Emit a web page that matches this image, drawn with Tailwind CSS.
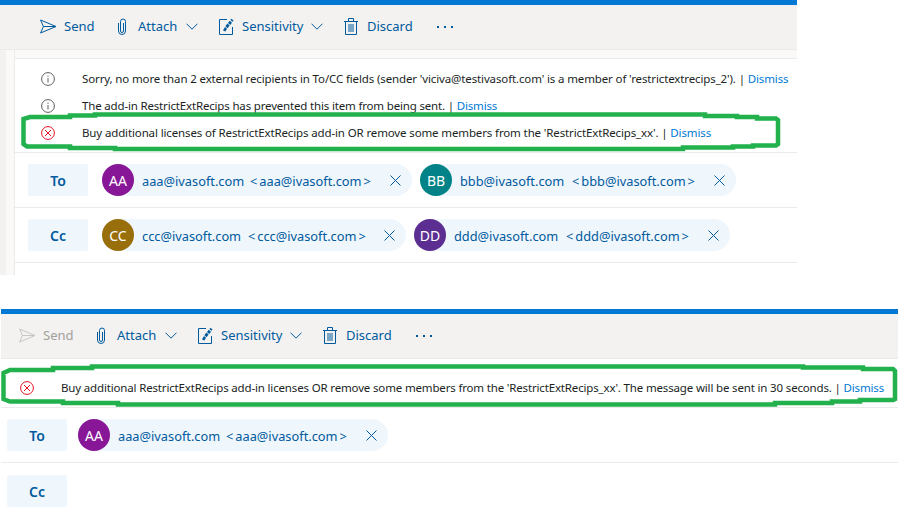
<!DOCTYPE html>
<html lang="en">
  <head>
    <meta charset="UTF-8" />
    <meta name="viewport" content="width=device-width, initial-scale=1.0" />
    <title>RestrictExtRecips compose errors</title>
    <script src="https://cdn.jsdelivr.net/npm/@tailwindcss/browser@4"></script>
  </head>

  <body class="relative w-[898px] h-[520px] overflow-hidden bg-white font-['Noto_Sans',sans-serif] text-[#201f1e]">
    <!-- shared toolbar / message icons -->
    <svg class="hidden">
      <symbol id="send" viewBox="0 0 17 15"><path d="M.6 1 16 7.5.6 14 3.4 7.5ZM3.4 7.5H16" fill="none" stroke="currentColor" stroke-width="1" /></symbol>
      <symbol id="clip" viewBox="0 0 11 17"><path d="M6.5 5v8a1.5 1.5 0 0 1-3 0V3.5a2.5 2.5 0 0 1 5 0V13a3.5 3.5 0 0 1-7 0V5" fill="none" stroke="currentColor" stroke-width="1" /></symbol>
      <symbol id="chevron" viewBox="0 0 12 7"><path d="M.5.7 6 6.2 11.5.7" fill="none" stroke="currentColor" stroke-width="1" /></symbol>
      <symbol id="label" viewBox="0 0 16 17"><path d="M8 1.5H.5v15h13V9" fill="none" stroke="currentColor" stroke-width="1" /><path d="M4 12.5 6 9l2 1.8-1.6 2.6ZM6.4 8.2l2-2.6 2.2 2-2 2.6ZM9 5l1.8-2.2 2.2 2-1.8 2.2ZM11.4 2l1-1.2 2.2 1.8-1 1.2Z" fill="currentColor" /></symbol>
      <symbol id="trash" viewBox="0 0 14 17"><path d="M0 3.5h14M4.5 3.5v-3h5v3M1.5 3.5v13h11v-13M5 6v8M7 6v8M9 6v8" fill="none" stroke="currentColor" stroke-width="1" /></symbol>
      <symbol id="info" viewBox="0 0 14 14"><circle cx="7" cy="7" r="6.4" fill="none" stroke="currentColor" stroke-width="1" /><path d="M7 6v4.5M7 3.6v1.2" fill="none" stroke="currentColor" stroke-width="1" /></symbol>
      <symbol id="error" viewBox="0 0 14 14"><circle cx="7" cy="7" r="6.4" fill="none" stroke="currentColor" stroke-width="1" /><path d="M4 4l6 6M10 4l-6 6" fill="none" stroke="currentColor" stroke-width="1" /></symbol>
      <symbol id="close" viewBox="0 0 11 11"><path d="M.5.5l10 10M10.5.5l-10 10" fill="none" stroke="currentColor" stroke-width="1" /></symbol>
    </svg>

    <!-- first compose window -->
    <section class="w-[797px] h-[275px] flex flex-col">
      <div class="h-[5px] bg-[#0078d4]"></div>
      <div class="h-[45px] flex items-center pl-[40px] pb-[1px] bg-[#f3f2f1] border-b border-[#ebeaea] text-[13px] text-[#005a9e]">
        <svg class="w-[17px] h-[15px]"><use href="#send" /></svg>
        <span class="ml-[7px] mt-[1px] w-[30px]">Send</span>
        <svg class="ml-[23px] w-[11px] h-[17px]"><use href="#clip" /></svg>
        <span class="ml-[10px] mt-[1px] w-[40px]">Attach</span>
        <svg class="ml-[8px] w-[12px] h-[7px]"><use href="#chevron" /></svg>
        <svg class="ml-[21px] w-[16px] h-[17px]"><use href="#label" /></svg>
        <span class="ml-[7px] mt-[1px] w-[61px]">Sensitivity</span>
        <svg class="ml-[8px] w-[12px] h-[7px]"><use href="#chevron" /></svg>
        <svg class="ml-[21px] w-[14px] h-[17px]"><use href="#trash" /></svg>
        <span class="ml-[9px] mt-[1px] w-[45px]">Discard</span>
        <div class="ml-[25px] flex gap-[5px]">
          <i class="w-[2px] h-[2px] bg-[#005a9e]"></i><i class="w-[2px] h-[2px] bg-[#005a9e]"></i><i class="w-[2px] h-[2px] bg-[#005a9e]"></i>
        </div>
      </div>
      <div class="flex-1 flex min-h-0">
        <div class="w-[15px] shrink-0 flex">
          <div class="w-[6px] bg-[#f3f2f1]"></div>
          <div class="w-[9px] bg-[#faf9f8] border-r border-[#ebebeb]"></div>
        </div>
        <div class="flex-1 min-w-0 flex flex-col">
          <div class="h-[9px] bg-[#faf9f8] border-b border-[#ebebeb]"></div>
          <div class="h-[94px] py-[6px] border-b border-[#ebebeb] text-[11.5px] tracking-[-0.13px]">
            <div class="h-[27px] flex items-center pl-[26px]">
              <svg class="w-[14px] h-[14px] shrink-0 text-[#605e5c]"><use href="#info" /></svg>
              <p class="ml-[27px] whitespace-nowrap">Sorry, no more than 2 external recipients in To/CC fields (sender 'viciva@testivasoft.com' is a member of 'restrictextrecips_2'). | <span class="text-[#0078d4]">Dismiss</span></p>
            </div>
            <div class="h-[27px] flex items-center pl-[26px]">
              <svg class="w-[14px] h-[14px] shrink-0 text-[#605e5c]"><use href="#info" /></svg>
              <p class="ml-[27px] whitespace-nowrap tracking-[-0.17px]">The add-in RestrictExtRecips has prevented this item from being sent. | <span class="text-[#0078d4]">Dismiss</span></p>
            </div>
            <div class="h-[27px] flex items-center pl-[26px]">
              <svg class="w-[14px] h-[14px] shrink-0 text-[#e81123]"><use href="#error" /></svg>
              <p class="ml-[27px] whitespace-nowrap">Buy additional licenses of RestrictExtRecips add-in OR remove some members from the 'RestrictExtRecips_xx'. | <span class="text-[#0078d4]">Dismiss</span></p>
            </div>
          </div>
          <div class="h-[55px] flex items-center pl-[13px] border-b border-[#ebebeb]">
            <div class="w-[60px] h-[32px] pt-[1px] flex items-center justify-center rounded-[2px] bg-[#eff6fc] text-[14px] font-semibold text-[#005a9e]">To</div>
            <div class="ml-[14px] w-[310px] h-[32px] flex items-center rounded-full bg-[#eff6fc] text-[12.8px] text-[#005a9e]">
              <div class="w-[32px] h-[32px] pt-[1px] flex items-center justify-center rounded-full bg-[#881798] text-[14px] text-white">AA</div>
              <span class="ml-[8px] mt-[3px] w-[108px]">aaa@ivasoft.com</span>
              <span class="mt-[3px]">&lt;<span class="mx-[2px]">aaa@ivasoft.com</span>&gt;</span>
              <svg class="ml-auto mr-[11px] w-[11px] h-[11px]"><use href="#close" /></svg>
            </div>
            <div class="ml-[8px] w-[316px] h-[32px] flex items-center rounded-full bg-[#eff6fc] text-[12.8px] text-[#005a9e]">
              <div class="w-[32px] h-[32px] pt-[1px] flex items-center justify-center rounded-full bg-[#038387] text-[14px] text-white">BB</div>
              <span class="ml-[8px] mt-[3px] w-[112px]">bbb@ivasoft.com</span>
              <span class="mt-[3px]">&lt;<span class="mx-[2px]">bbb@ivasoft.com</span>&gt;</span>
              <svg class="ml-auto mr-[11px] w-[11px] h-[11px]"><use href="#close" /></svg>
            </div>
          </div>
          <div class="h-[55px] flex items-center pl-[13px] border-b border-[#ebebeb]">
            <div class="w-[60px] h-[32px] pt-[1px] flex items-center justify-center rounded-[2px] bg-[#eff6fc] text-[14px] font-semibold text-[#005a9e]">Cc</div>
            <div class="ml-[14px] w-[304px] h-[32px] flex items-center rounded-full bg-[#eff6fc] text-[12.8px] text-[#005a9e]">
              <div class="w-[32px] h-[32px] pt-[1px] flex items-center justify-center rounded-full bg-[#986f0b] text-[14px] text-white">CC</div>
              <span class="ml-[8px] mt-[3px] w-[106px]">ccc@ivasoft.com</span>
              <span class="mt-[3px]">&lt;<span class="mx-[2px]">ccc@ivasoft.com</span>&gt;</span>
              <svg class="ml-auto mr-[11px] w-[11px] h-[11px]"><use href="#close" /></svg>
            </div>
            <div class="ml-[8px] w-[316px] h-[32px] flex items-center rounded-full bg-[#eff6fc] text-[12.8px] text-[#005a9e]">
              <div class="w-[32px] h-[32px] pt-[1px] flex items-center justify-center rounded-full bg-[#5c2e91] text-[14px] text-white">DD</div>
              <span class="ml-[8px] mt-[3px] w-[112px]">ddd@ivasoft.com</span>
              <span class="mt-[3px]">&lt;<span class="mx-[2px]">ddd@ivasoft.com</span>&gt;</span>
              <svg class="ml-auto mr-[11px] w-[11px] h-[11px]"><use href="#close" /></svg>
            </div>
          </div>
        </div>
      </div>
    </section>

    <!-- second compose window -->
    <section class="mt-[34px] ml-[1px] w-[897px] flex flex-col">
      <div class="h-[5px] bg-[#0078d4]"></div>
      <div class="h-[45px] flex items-center pl-[18px] pb-[1px] bg-[#f3f2f1] border-b border-[#ebeaea] text-[13px] text-[#005a9e]">
        <svg class="w-[17px] h-[15px] text-[#c8c6c4]"><use href="#send" /></svg>
        <span class="ml-[7px] mt-[1px] w-[30px] text-[#a19f9d]">Send</span>
        <svg class="ml-[23px] w-[11px] h-[17px]"><use href="#clip" /></svg>
        <span class="ml-[10px] mt-[1px] w-[40px]">Attach</span>
        <svg class="ml-[8px] w-[12px] h-[7px]"><use href="#chevron" /></svg>
        <svg class="ml-[21px] w-[16px] h-[17px]"><use href="#label" /></svg>
        <span class="ml-[7px] mt-[1px] w-[61px]">Sensitivity</span>
        <svg class="ml-[8px] w-[12px] h-[7px]"><use href="#chevron" /></svg>
        <svg class="ml-[21px] w-[14px] h-[17px]"><use href="#trash" /></svg>
        <span class="ml-[9px] mt-[1px] w-[45px]">Discard</span>
        <div class="ml-[25px] flex gap-[5px]">
          <i class="w-[2px] h-[2px] bg-[#005a9e]"></i><i class="w-[2px] h-[2px] bg-[#005a9e]"></i><i class="w-[2px] h-[2px] bg-[#005a9e]"></i>
        </div>
      </div>
      <div class="h-[49px] flex items-center pl-[19px] pt-[10px] border-b border-[#ebebeb] text-[11.5px] tracking-[-0.16px]">
        <svg class="w-[14px] h-[14px] shrink-0 text-[#e81123]"><use href="#error" /></svg>
        <p class="ml-[27px] whitespace-nowrap">Buy additional RestrictExtRecips add-in licenses OR remove some members from the 'RestrictExtRecips_xx'. The message will be sent in 30 seconds. | <span class="text-[#0078d4]">Dismiss</span></p>
      </div>
      <div class="h-[55px] flex items-center pl-[6px] border-b border-[#ebebeb]">
        <div class="w-[60px] h-[32px] pt-[1px] flex items-center justify-center rounded-[2px] bg-[#eff6fc] text-[14px] font-semibold text-[#005a9e]">To</div>
        <div class="ml-[11px] w-[310px] h-[32px] flex items-center rounded-full bg-[#eff6fc] text-[12.8px] text-[#005a9e]">
          <div class="w-[32px] h-[32px] pt-[1px] flex items-center justify-center rounded-full bg-[#881798] text-[14px] text-white">AA</div>
          <span class="ml-[8px] mt-[3px] w-[108px]">aaa@ivasoft.com</span>
          <span class="mt-[3px]">&lt;<span class="mx-[2px]">aaa@ivasoft.com</span>&gt;</span>
          <svg class="ml-auto mr-[11px] w-[11px] h-[11px]"><use href="#close" /></svg>
        </div>
      </div>
      <div class="h-[55px] flex items-center pl-[6px]">
        <div class="w-[60px] h-[32px] pt-[1px] flex items-center justify-center rounded-[2px] bg-[#eff6fc] text-[14px] font-semibold text-[#005a9e]">Cc</div>
      </div>
    </section>

    <!-- hand-drawn green highlights on top of the screenshot -->
    <svg class="absolute left-0 top-0 pointer-events-none" width="898" height="520" fill="none" stroke="#22b14c" stroke-width="4.5">
      <path d="M95 114.5H705V116H737V117H757V118.5H776L778 120V144L776 145.5H753V146.5H733V147.5H683V149H115V148H70V146.5H27L23.5 144V119L30 117H70V115.5H95Z" />
      <path d="M92 366.5H803V367.5H863V369H893L895 371V399L893 400H860V401.5H832V403H775V404.5H118V403H63V401.5H10L3.5 399V373L10 370H53V368H92Z" />
    </svg>
  </body>
</html>
